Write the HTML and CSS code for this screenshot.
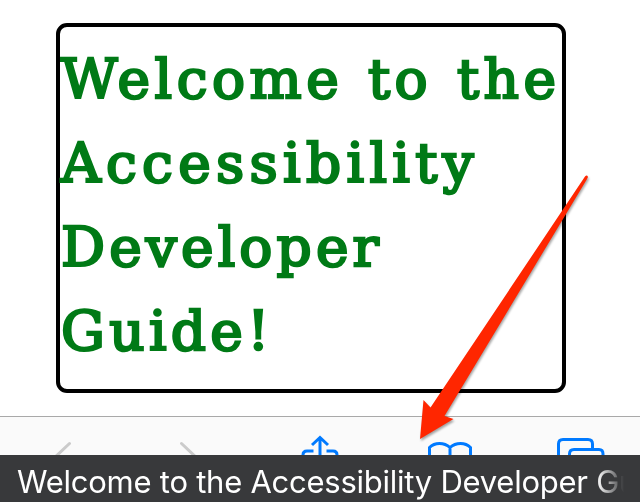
FILE: index.html
```
<!DOCTYPE html>
<html lang="en">
<head>
<meta charset="utf-8">
<title>Accessibility Developer Guide</title>
<link rel="stylesheet" href="styles.css">
</head>
<body>
<main class="page">
  <h1 class="focus-box">
    <span class="line line-welcome">Welcome to the</span>
    <span class="line line-access">Accessibility</span>
    <span class="line line-dev">Developer</span>
    <span class="line line-guide">Guide!</span>
  </h1>
</main>
<nav class="toolbar">
  <svg class="icons" width="640" height="38" viewBox="0 417 640 38" fill="none" stroke="#007aff" stroke-width="3">
    <g stroke="#cbcbcb" stroke-linecap="round"><path d="M69.5 443.5 52 460M181.5 443.5 199 460"/></g>
    <path d="M320 438v22M312 445l8-7.5 8 7.500M313.500 451H307q-4 0-4 4v5M326.500 451H333q4 0 4 4v5"/>
    <path d="M429.500 460v-12.500q4-4 10-4t10.500 4q4.500-4 10.500-4t10 4V460M450 447.500V460"/>
    <path d="M558.500 460v-16q0-4.500 4.500-4.500h25q4.500 0 4.500 4.500v4M569.500 460v-6q0-4.500 4.500-4.500h25q4 0 4 4.500v6"/>
  </svg>
</nav>
<div class="caption"><span>Welcome to the Accessibility Developer Gu</span></div>
<svg class="arrow" width="640" height="502" viewBox="0 0 640 502">
  <path fill="#ff2600" d="M585 176.500Q587 174.500 588 177L586.500 180 444.500 416 453.500 419 420 439 423.500 400 430.500 407.500Z"/>
</svg>
</body>
</html>
```
FILE: styles.css
```
* { box-sizing: border-box; }
body {
  margin: 0;
  width: 640px;
  height: 502px;
  overflow: hidden;
  display: flex;
  flex-direction: column;
  position: relative;
  background: #fff;
}
.page { height: 416px; padding: 23px 0 0 56px; }
.focus-box {
  margin: 0;
  width: 510px;
  height: 370px;
  padding: 10px 0 0 1px;
  border: 4px solid #000;
  border-radius: 11px;
  color: #007a16;
  font: normal 55px/84px "DejaVu Serif", serif;
  -webkit-text-stroke: 2.5px #007a16;
  white-space: nowrap;
}
.line { display: block; }
.line-welcome { letter-spacing: 4.500px; word-spacing: 2.700px; }
.line-access { letter-spacing: 5.300px; }
.line-dev { letter-spacing: 4.100px; }
.line-guide { letter-spacing: 4.300px; }
.toolbar {
  height: 39px;
  border-top: 1px solid #a9a9a9;
  background: #fafafa;
}
.icons { display: block; }
.caption {
  height: 47px;
  padding-left: 17px;
  background: #38393b;
  color: #fff;
  font: 31px/53px Inter, "Liberation Sans", sans-serif;
  letter-spacing: -.25px;
  white-space: nowrap;
}
.caption span {
  display: block;
  width: 623px;
  -webkit-mask-image: linear-gradient(to right, #000 580px, transparent 607px);
  mask-image: linear-gradient(to right, #000 580px, transparent 607px);
}
.arrow {
  position: absolute;
  inset: 0;
  filter: drop-shadow(1px 2px 1px rgba(0, 0, 0, .35));
}
```
